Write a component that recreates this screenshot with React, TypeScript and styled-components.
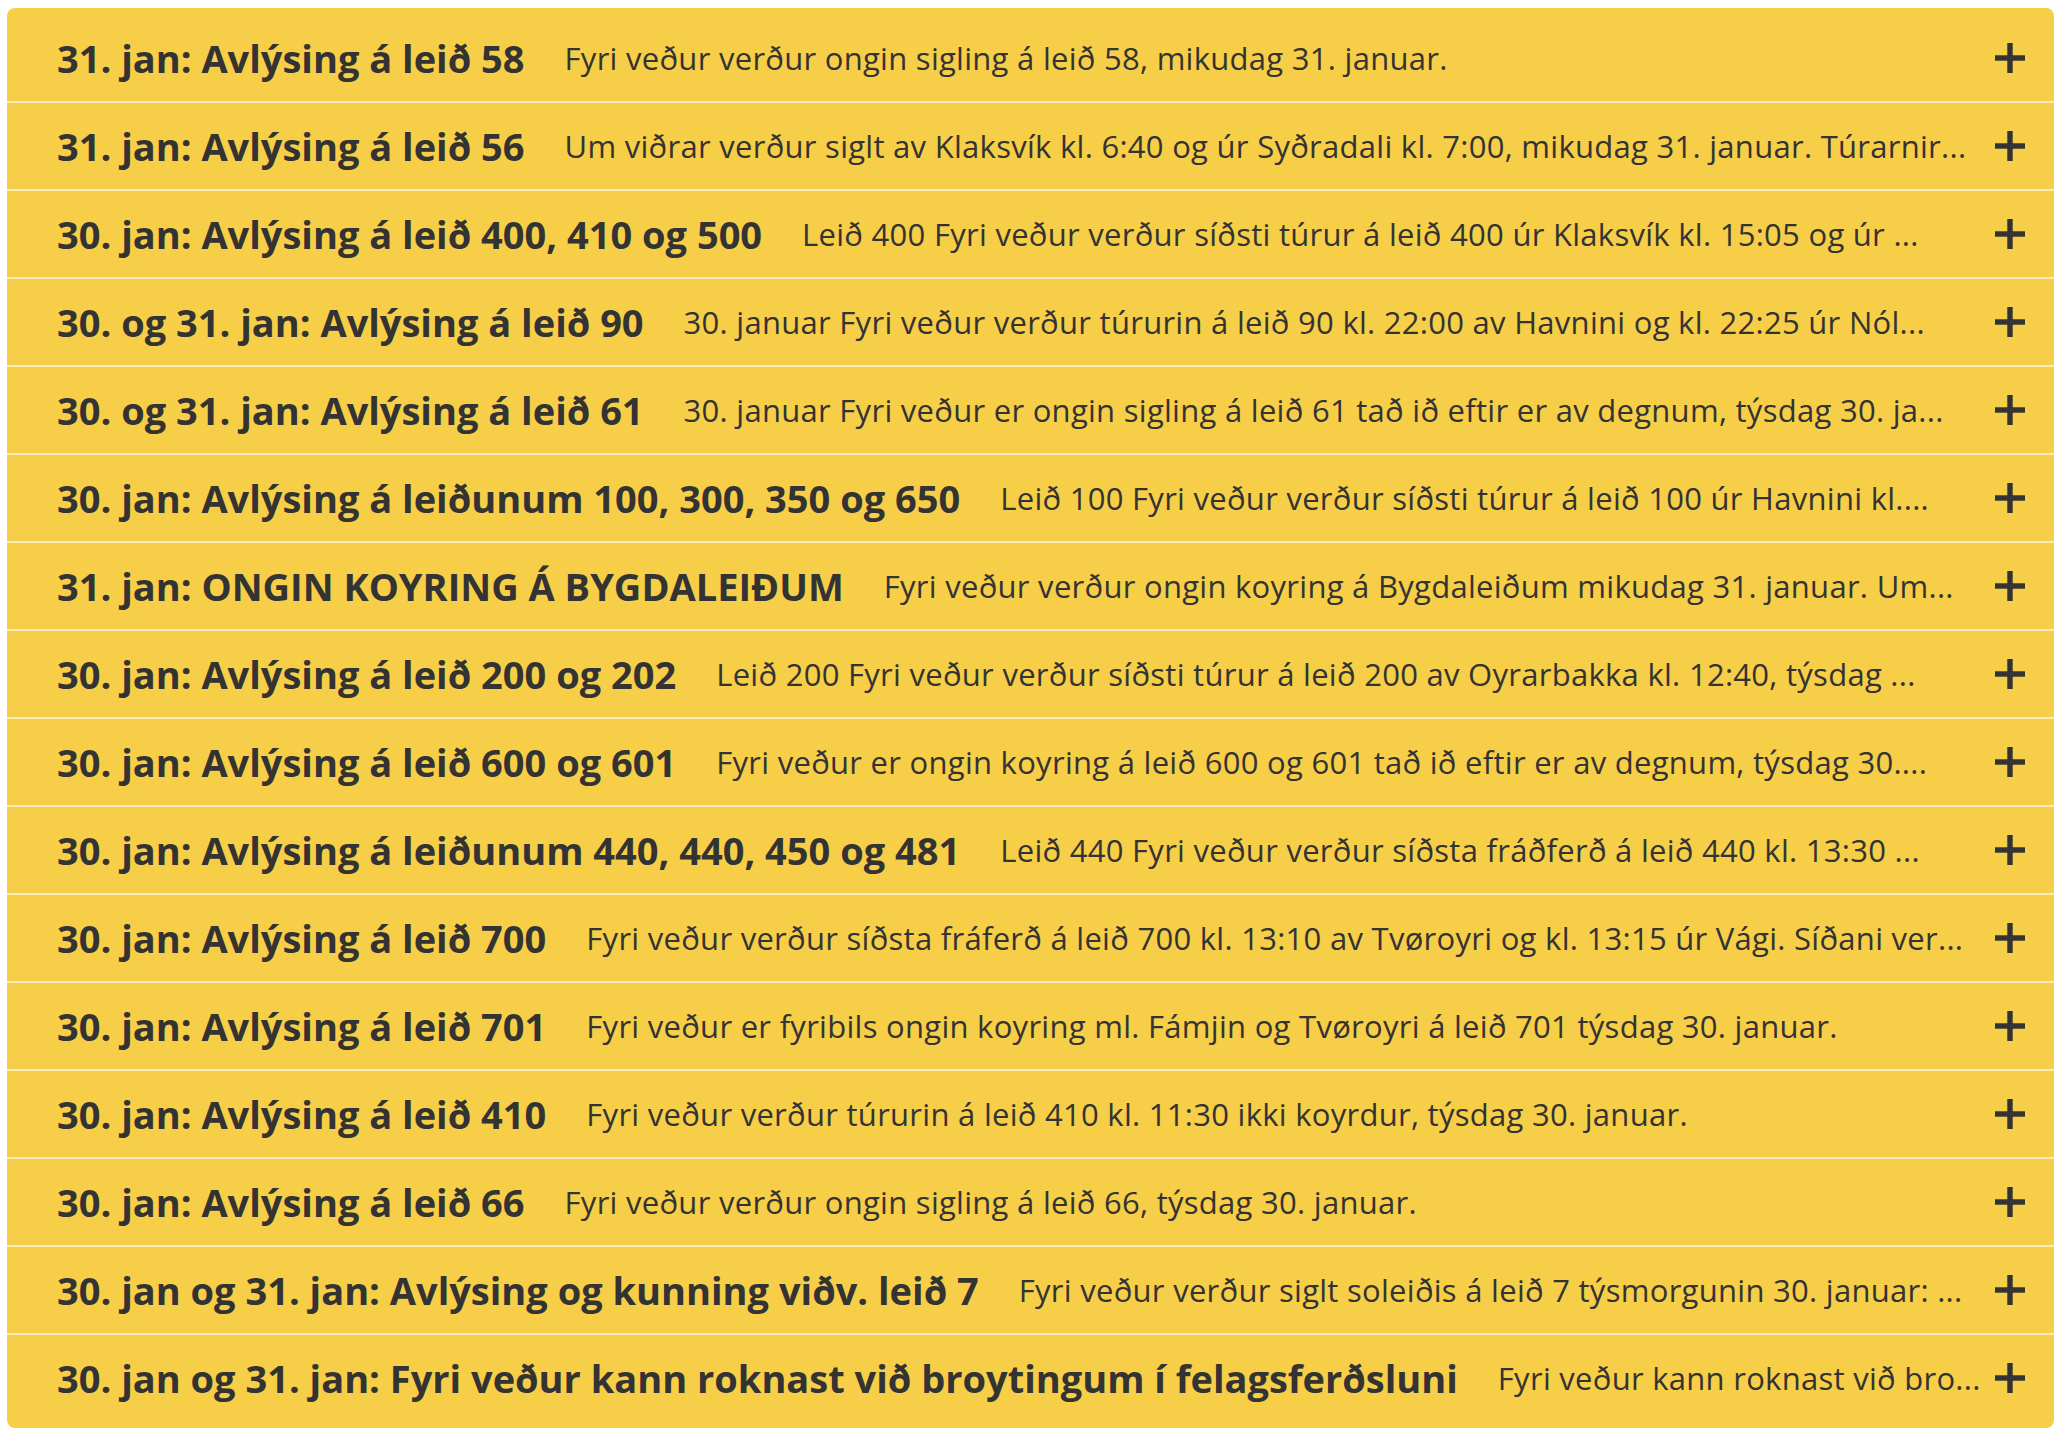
import React from "react";
import styled, { createGlobalStyle } from "styled-components";

const GlobalStyle = createGlobalStyle`
  html, body {
    margin: 0;
    padding: 0;
    background: #fff;
  }
  body {
    font-family: "Open Sans", Lato, "Noto Sans", sans-serif;
    color: #333;
  }
`;

const Page = styled.div`
  padding: 8px 6px 8px 7px;
`;

const List = styled.div`
  background-color: #f7ce47;
  border-radius: 8px;
  padding: 7px 0;
`;

const Row = styled.div`
  display: flex;
  align-items: center;
  height: 86px;
  padding: 0 29px 0 50px;
  & + & {
    border-top: 2px solid #fcedb8;
  }
`;

const Title = styled.h3`
  flex: none;
  margin: 0 40px 0 0;
  font-size: 38px;
  font-weight: 700;
  white-space: nowrap;
  color: #333;
`;

const Preview = styled.p`
  flex: 1;
  min-width: 0;
  margin: 0;
  font-size: 31px;
  font-weight: 400;
  letter-spacing: 0.28px;
  white-space: nowrap;
  overflow: hidden;
  text-overflow: ellipsis;
  color: #333;
`;

const Toggle = styled.button`
  flex: none;
  display: flex;
  margin-left: 11px;
  padding: 0;
  border: 0;
  background: none;
  cursor: pointer;
`;

const PlusIcon = () => (
  <svg width="30" height="30" viewBox="0 0 30 30">
    <rect x="12.3" y="0" width="5.4" height="30" fill="#333" />
    <rect x="0" y="12.3" width="30" height="5.4" fill="#333" />
  </svg>
);

const notices = [
  {
    title: "31. jan: Avlýsing á leið 58",
    text: "Fyri veður verður ongin sigling á leið 58, mikudag 31. januar.",
  },
  {
    title: "31. jan: Avlýsing á leið 56",
    text: "Um viðrar verður siglt av Klaksvík kl. 6:40 og úr Syðradali kl. 7:00, mikudag 31. januar. Túrarnir...",
  },
  {
    title: "30. jan: Avlýsing á leið 400, 410 og 500",
    text: "Leið 400 Fyri veður verður síðsti túrur á leið 400 úr Klaksvík kl. 15:05 og úr ...",
  },
  {
    title: "30. og 31. jan: Avlýsing á leið 90",
    text: "30. januar Fyri veður verður túrurin á leið 90 kl. 22:00 av Havnini og kl. 22:25 úr Nól...",
  },
  {
    title: "30. og 31. jan: Avlýsing á leið 61",
    text: "30. januar Fyri veður er ongin sigling á leið 61 tað ið eftir er av degnum, týsdag 30. ja...",
  },
  {
    title: "30. jan: Avlýsing á leiðunum 100, 300, 350 og 650",
    text: "Leið 100 Fyri veður verður síðsti túrur á leið 100 úr Havnini kl....",
  },
  {
    title: "31. jan: ONGIN KOYRING Á BYGDALEIÐUM",
    text: "Fyri veður verður ongin koyring á Bygdaleiðum mikudag 31. januar. Um...",
  },
  {
    title: "30. jan: Avlýsing á leið 200 og 202",
    text: "Leið 200 Fyri veður verður síðsti túrur á leið 200 av Oyrarbakka kl. 12:40, týsdag ...",
  },
  {
    title: "30. jan: Avlýsing á leið 600 og 601",
    text: "Fyri veður er ongin koyring á leið 600 og 601 tað ið eftir er av degnum, týsdag 30....",
  },
  {
    title: "30. jan: Avlýsing á leiðunum 440, 440, 450 og 481",
    text: "Leið 440 Fyri veður verður síðsta fráðferð á leið 440 kl. 13:30 ...",
  },
  {
    title: "30. jan: Avlýsing á leið 700",
    text: "Fyri veður verður síðsta fráferð á leið 700 kl. 13:10 av Tvøroyri og kl. 13:15 úr Vági. Síðani ver...",
  },
  {
    title: "30. jan: Avlýsing á leið 701",
    text: "Fyri veður er fyribils ongin koyring ml. Fámjin og Tvøroyri á leið 701 týsdag 30. januar.",
  },
  {
    title: "30. jan: Avlýsing á leið 410",
    text: "Fyri veður verður túrurin á leið 410 kl. 11:30 ikki koyrdur, týsdag 30. januar.",
  },
  {
    title: "30. jan: Avlýsing á leið 66",
    text: "Fyri veður verður ongin sigling á leið 66, týsdag 30. januar.",
  },
  {
    title: "30. jan og 31. jan: Avlýsing og kunning viðv. leið 7",
    text: "Fyri veður verður siglt soleiðis á leið 7 týsmorgunin 30. januar: ...",
  },
  {
    title: "30. jan og 31. jan: Fyri veður kann roknast við broytingum í felagsferðsluni",
    text: "Fyri veður kann roknast við bro...",
  },
];

const App = () => {
  return (
    <>
      <GlobalStyle />
      <Page>
        <List>
          {notices.map((n) => (
            <Row key={n.title}>
              <Title>{n.title}</Title>
              <Preview>{n.text}</Preview>
              <Toggle aria-label="Vís meira">
                <PlusIcon />
              </Toggle>
            </Row>
          ))}
        </List>
      </Page>
    </>
  );
};

export default App;
